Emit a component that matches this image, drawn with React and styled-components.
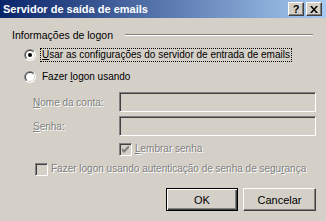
import React from "react";
import styled, { createGlobalStyle } from "styled-components";

const Global = createGlobalStyle`
  html, body { margin: 0; padding: 0; background: #D4D0C8; }
  body { font-family: "Liberation Sans", Arial, sans-serif; font-size: 10px; color: #000; }
`;

const Window = styled.div`
  width: 326px;
  height: 221px;
  background: #D4D0C8;
  display: flex;
  flex-direction: column;
  overflow: hidden;
`;

const TitleBar = styled.div`
  height: 18px;
  display: flex;
  align-items: center;
  padding: 0 4px 0 3px;
  background: linear-gradient(to right, #0A246A, #A6CAF0);
`;

const TitleText = styled.span`
  color: #fff;
  font-weight: bold;
  font-size: 11px;
`;

const TitleButtons = styled.div`
  margin-left: auto;
  display: flex;
  gap: 2px;
`;

const TitleButton = styled.div`
  width: 16px;
  height: 14px;
  box-sizing: border-box;
  background: #D4D0C8;
  border-top: 1px solid #fff;
  border-left: 1px solid #fff;
  border-right: 1px solid #404040;
  border-bottom: 1px solid #404040;
  box-shadow: inset -1px -1px #808080;
  display: flex;
  align-items: center;
  justify-content: center;
  font-weight: bold;
  font-size: 11px;
  line-height: 1;
`;

const Body = styled.div`
  flex: 1;
  display: flex;
  flex-direction: column;
  padding: 0 10px 0 12px;
  font-size: 10px;
`;

const GroupHeader = styled.div`
  margin-top: 10px;
  height: 13px;
  display: flex;
  align-items: center;
  font-size: 10.5px;
`;

const GroupLine = styled.div`
  flex: 1;
  margin-left: 12px;
  margin-right: 3px;
  height: 0;
  border-top: 1px solid #808080;
  border-bottom: 1px solid #fff;
`;

const OptionRow = styled.div`
  display: flex;
  align-items: center;
  height: 14px;
  margin-top: ${(p) => p.$mt}px;
  padding-left: ${(p) => p.$indent}px;
`;

const OptionLabel = styled.span`
  margin-left: ${(p) => p.$gap}px;
  padding: 0 1px;
  border: 1px ${(p) => (p.$focus ? "dotted #000" : "solid transparent")};
  line-height: 12px;
  color: ${(p) => (p.$disabled ? "#808080" : "#000")};
  text-shadow: ${(p) => (p.$disabled ? "1px 1px 0 #fff" : "none")};
  white-space: nowrap;
`;

const FieldRow = styled.div`
  display: flex;
  align-items: center;
  margin-top: ${(p) => p.$mt}px;
  padding-left: 21px;
`;

const FieldLabel = styled.span`
  width: 86px;
  color: #808080;
  text-shadow: 1px 1px 0 #fff;
`;

const TextBox = styled.div`
  width: 197px;
  height: 20px;
  box-sizing: border-box;
  background: #D4D0C8;
  border-top: 1px solid #808080;
  border-left: 1px solid #808080;
  border-right: 1px solid #fff;
  border-bottom: 1px solid #fff;
  box-shadow: inset 1px 1px #404040, inset -1px -1px #D4D0C8;
`;

const CheckBox = styled.div`
  width: 13px;
  height: 13px;
  box-sizing: border-box;
  flex: none;
  background: ${(p) => (p.$disabled ? "#D4D0C8" : "#fff")};
  border-top: 1px solid #808080;
  border-left: 1px solid #808080;
  border-right: 1px solid #fff;
  border-bottom: 1px solid #fff;
  box-shadow: inset 1px 1px #404040, inset -1px -1px #D4D0C8;
  display: flex;
  align-items: center;
  justify-content: center;
`;

const Footer = styled.div`
  display: flex;
  justify-content: flex-end;
  gap: 5px;
  margin-top: 12px;
`;

const PushButton = styled.div`
  width: ${(p) => p.$w}px;
  height: 23px;
  box-sizing: border-box;
  display: flex;
  align-items: center;
  justify-content: center;
  background: #D4D0C8;
  font-size: 11px;
  ${(p) =>
    p.$default
      ? `border: 1px solid #000;
         box-shadow: inset 1px 1px #fff, inset -1px -1px #404040, inset -2px -2px #808080;`
      : `border-top: 1px solid #fff; border-left: 1px solid #fff;
         border-right: 1px solid #404040; border-bottom: 1px solid #404040;
         box-shadow: inset -1px -1px #808080;`}
`;

const Key = styled.u`
  text-decoration-thickness: 1px;
  text-underline-offset: 1px;
`;

function Radio({ checked }) {
  return (
    <svg width="12" height="12" viewBox="0 0 12 12">
      <circle cx="6" cy="6" r="6" fill="#fff" />
      <path d="M1.757 10.243 A6 6 0 0 1 10.243 1.757 Z" fill="#808080" />
      <circle cx="6" cy="6" r="5" fill="#D4D0C8" />
      <path d="M2.464 9.536 A5 5 0 0 1 9.536 2.464 Z" fill="#404040" />
      <circle cx="6" cy="6" r="4" fill="#fff" />
      {checked && <circle cx="6" cy="6" r="2" fill="#000" />}
    </svg>
  );
}

function Check({ color }) {
  return (
    <svg width="7" height="7" viewBox="0 0 7 7">
      <path d="M0 2 L0 5 L2 7 L7 2 L7 -1 L2 4 Z" fill={color} />
    </svg>
  );
}

export default function App() {
  return (
    <>
      <Global />
      <Window>
        <TitleBar>
          <TitleText>Servidor de saída de emails</TitleText>
          <TitleButtons>
            <TitleButton>?</TitleButton>
            <TitleButton>
              <svg width="8" height="7" viewBox="0 0 8 7">
                <path d="M0 0h2l2 2.5L6 0h2L5 3.5L8 7H6L4 4.5L2 7H0l3-3.5z" fill="#000" />
              </svg>
            </TitleButton>
          </TitleButtons>
        </TitleBar>
        <Body>
          <GroupHeader>
            <span>Informações de logon</span>
            <GroupLine />
          </GroupHeader>
          <OptionRow $mt={7} $indent={12}>
            <Radio checked />
            <OptionLabel $gap={4} $focus>
              <Key>U</Key>sar as configurações do servidor de entrada de emails
            </OptionLabel>
          </OptionRow>
          <OptionRow $mt={8} $indent={12}>
            <Radio />
            <OptionLabel $gap={4}>
              Fazer <Key>l</Key>ogon usando
            </OptionLabel>
          </OptionRow>
          <FieldRow $mt={8}>
            <FieldLabel>
              <Key>N</Key>ome da conta:
            </FieldLabel>
            <TextBox />
          </FieldRow>
          <FieldRow $mt={4}>
            <FieldLabel>
              <Key>S</Key>enha:
            </FieldLabel>
            <TextBox />
          </FieldRow>
          <OptionRow $mt={6} $indent={107}>
            <CheckBox $disabled>
              <Check color="#808080" />
            </CheckBox>
            <OptionLabel $gap={1} $disabled>
              <Key>L</Key>embrar senha
            </OptionLabel>
          </OptionRow>
          <OptionRow $mt={6} $indent={23}>
            <CheckBox $disabled />
            <OptionLabel $gap={1} $disabled>
              Fazer logon usando autenticação de senha de segu<Key>r</Key>ança
            </OptionLabel>
          </OptionRow>
          <Footer>
            <PushButton $w={72} $default>OK</PushButton>
            <PushButton $w={73}>Cancelar</PushButton>
          </Footer>
        </Body>
      </Window>
    </>
  );
}
